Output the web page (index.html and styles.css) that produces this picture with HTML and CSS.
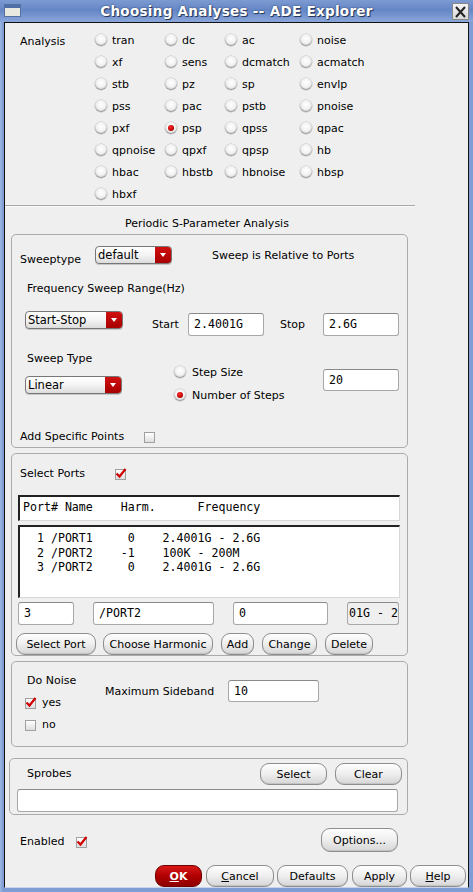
FILE: index.html
```html
<!DOCTYPE html>
<html>
<head>
<meta charset="utf-8">
<title>Choosing Analyses -- ADE Explorer</title>
<link rel="stylesheet" href="styles.css">
</head>
<body>
<div class="win">
  <div class="titlebar">
    <span class="ticon"><span class="ticon-bar"></span></span>
    <span class="ttext">Choosing Analyses -- ADE Explorer</span>
    <span class="tclose"><svg width="15" height="14" viewBox="0 0 15 14"><path d="M3 2 L12 12 M12 2 L3 12" stroke="#222" stroke-width="2"/></svg></span>
  </div>
  <div class="frame">
    <div class="content">
      <div class="analysis">
        <div class="alabel">Analysis</div>
        <div class="agrid">
          <label class="radio"><span class="rb"></span>tran</label>
          <label class="radio"><span class="rb"></span>dc</label>
          <label class="radio"><span class="rb"></span>ac</label>
          <label class="radio"><span class="rb"></span>noise</label>
          <label class="radio"><span class="rb"></span>xf</label>
          <label class="radio"><span class="rb"></span>sens</label>
          <label class="radio"><span class="rb"></span>dcmatch</label>
          <label class="radio"><span class="rb"></span>acmatch</label>
          <label class="radio"><span class="rb"></span>stb</label>
          <label class="radio"><span class="rb"></span>pz</label>
          <label class="radio"><span class="rb"></span>sp</label>
          <label class="radio"><span class="rb"></span>envlp</label>
          <label class="radio"><span class="rb"></span>pss</label>
          <label class="radio"><span class="rb"></span>pac</label>
          <label class="radio"><span class="rb"></span>pstb</label>
          <label class="radio"><span class="rb"></span>pnoise</label>
          <label class="radio"><span class="rb"></span>pxf</label>
          <label class="radio"><span class="rb on"></span>psp</label>
          <label class="radio"><span class="rb"></span>qpss</label>
          <label class="radio"><span class="rb"></span>qpac</label>
          <label class="radio"><span class="rb"></span>qpnoise</label>
          <label class="radio"><span class="rb"></span>qpxf</label>
          <label class="radio"><span class="rb"></span>qpsp</label>
          <label class="radio"><span class="rb"></span>hb</label>
          <label class="radio"><span class="rb"></span>hbac</label>
          <label class="radio"><span class="rb"></span>hbstb</label>
          <label class="radio"><span class="rb"></span>hbnoise</label>
          <label class="radio"><span class="rb"></span>hbsp</label>
          <label class="radio"><span class="rb"></span>hbxf</label>
        </div>
      </div>
      <div class="sep"></div>
      <div class="section-title">Periodic S-Parameter Analysis</div>

      <div class="group g1">
        <div class="rowA">
          <span class="lbl sweeptype">Sweeptype</span>
          <span class="combo c-default"><span class="ctext">default</span><span class="carrow"></span></span>
          <span class="lbl relative">Sweep is Relative to Ports</span>
        </div>
        <div class="lbl freqrange">Frequency Sweep Range(Hz)</div>
        <div class="rowC">
          <span class="combo c-startstop"><span class="ctext">Start-Stop</span><span class="carrow"></span></span>
          <span class="lbl startlbl">Start</span>
          <span class="field f-start">2.4001G</span>
          <span class="lbl stoplbl">Stop</span>
          <span class="field f-stop">2.6G</span>
        </div>
        <div class="lbl sweeptypelbl">Sweep Type</div>
        <div class="rowE">
          <span class="combo c-linear"><span class="ctext">Linear</span><span class="carrow"></span></span>
          <div class="radiocol">
            <label class="radio r2"><span class="rb"></span>Step Size</label>
            <label class="radio r2"><span class="rb on"></span>Number of Steps</label>
          </div>
          <span class="field f-steps">20</span>
        </div>
        <div class="rowF">
          <span class="lbl addpts">Add Specific Points</span>
          <span class="cb"></span>
        </div>
      </div>

      <div class="group g2">
        <div class="rowSP">
          <span class="lbl selports">Select Ports</span>
          <span class="cb checked"><svg width="12" height="12" viewBox="0 0 12 12"><path d="M1.5 5.5 L4.5 8.5 L10.5 1" fill="none" stroke="#d00000" stroke-width="2.2"/></svg></span>
        </div>
        <div class="listhead mono">Port# Name    Harm.      Frequency</div>
        <div class="listbody mono">  1 /PORT1     0    2.4001G - 2.6G
  2 /PORT2    -1    100K - 200M
  3 /PORT2     0    2.4001G - 2.6G</div>
        <div class="rowIn">
          <span class="field fi1">3</span>
          <span class="field fi2">/PORT2</span>
          <span class="field fi3">0</span>
          <span class="field fi4 ro">01G - 2</span>
        </div>
        <div class="rowBtn">
          <span class="btn b-sel">Select Port</span>
          <span class="btn b-harm">Choose Harmonic</span>
          <span class="btn b-add">Add</span>
          <span class="btn b-chg">Change</span>
          <span class="btn b-del">Delete</span>
        </div>
      </div>

      <div class="group g3">
        <div class="noisecol">
          <div class="lbl donoise">Do Noise</div>
          <div class="cbrow"><span class="cb checked"><svg width="12" height="12" viewBox="0 0 12 12"><path d="M1.5 5.5 L4.5 8.5 L10.5 1" fill="none" stroke="#d00000" stroke-width="2.2"/></svg></span><span class="lbl">yes</span></div>
          <div class="cbrow"><span class="cb"></span><span class="lbl">no</span></div>
        </div>
        <span class="lbl maxsb">Maximum Sideband</span>
        <span class="field f-sb">10</span>
      </div>

      <div class="group g4">
        <div class="rowSprobe">
          <span class="lbl sprobes">Sprobes</span>
          <span class="btn b-select">Select</span>
          <span class="btn b-clear">Clear</span>
        </div>
        <div class="field f-sprobe"></div>
      </div>

      <div class="rowEnabled">
        <span class="lbl enabled">Enabled</span>
        <span class="cb checked"><svg width="12" height="12" viewBox="0 0 12 12"><path d="M1.5 5.5 L4.5 8.5 L10.5 1" fill="none" stroke="#d00000" stroke-width="2.2"/></svg></span>
        <span class="btn b-options">Options...</span>
      </div>

      <div class="rowBottom">
        <span class="btn b-ok"><u>O</u>K</span>
        <span class="btn b-cancel"><u>C</u>ancel</span>
        <span class="btn b-defaults">Defaults</span>
        <span class="btn b-apply">Apply</span>
        <span class="btn b-help"><u>H</u>elp</span>
      </div>
    </div>
  </div>
</div>
</body>
</html>
```
FILE: styles.css
```css
* { box-sizing: border-box; }
html, body { margin: 0; padding: 0; }
body {
  width: 473px;
  height: 892px;
  overflow: hidden;
  font-family: "DejaVu Sans", sans-serif;
  font-size: 11px;
  color: #000;
  background: #7f9dd4;
}
.win { width: 473px; height: 892px; display: flex; flex-direction: column; }

.titlebar {
  height: 22px;
  display: flex;
  align-items: center;
  position: relative;
  background: linear-gradient(to bottom, #7d9bd2 0%, #6586c6 45%, #8aa6da 100%);
}
.ticon {
  position: absolute;
  left: 4px; top: 4px;
  width: 17px; height: 13px;
  border: 1px solid #5670a0;
  background: #e8e8e0;
}
.ticon-bar { display: block; height: 3px; background: #4e6ea8; }
.ttext {
  flex: 1;
  text-align: center;
  color: #fff;
  font-weight: bold;
  font-size: 13.5px;
  letter-spacing: 0.3px;
  text-shadow: 1px 1px 0 #2a3a5a, 0 0 2px #2a3a5a;
  padding-left: 0;
}
.tclose {
  position: absolute;
  right: 4px; top: 3px;
  width: 17px; height: 17px;
  border: 1px solid #888;
  background: linear-gradient(#f4f4f4, #d8d8d8);
  display: flex; align-items: center; justify-content: center;
}

.frame {
  flex: 1;
  padding: 0 4px 4px 4px;
  background: linear-gradient(to right, #9fb7e2, #7f9dd4 3px);
}
.content {
  height: 866px;
  background: #efefef;
  border: 1px solid #111;
  border-bottom-color: #c8d4ea;
  display: flex;
  flex-direction: column;
}

.lbl { line-height: 14px; white-space: nowrap; }
.mono { font-family: "DejaVu Sans Mono", "Liberation Mono", monospace; font-size: 11.6px; white-space: pre; }

/* Analysis radios */
.analysis { display: flex; padding: 6px 0 0 15px; height: 182px; }
.alabel { width: 75px; margin-top: 6px; line-height: 14px; }
.agrid {
  display: grid;
  grid-template-columns: 70px 60px 75px 80px;
  grid-auto-rows: 22px;
}
.radio { display: flex; align-items: center; gap: 5px; white-space: nowrap; }
.rb {
  width: 12px; height: 12px;
  border-radius: 50%;
  flex: none;
  background: radial-gradient(circle at 50% 40%, #ffffff 0%, #f2f2f2 45%, #cfcfcf 100%);
  box-shadow: inset 0 -1px 1px #9a9a9a, 0 0 0 0.5px #bdbdbd;
  position: relative;
}
.rb.on::after {
  content: "";
  position: absolute;
  left: 3px; top: 3px;
  width: 6px; height: 6px;
  border-radius: 50%;
  background: radial-gradient(circle at 40% 35%, #ff3030, #c00000 60%, #8a0000);
}

.sep { width: 410px; height: 2px; border-top: 1px solid #a8a8a8; border-bottom: 1px solid #fafafa; }
.section-title { padding: 10px 0 3px 120px; line-height: 14px; }

/* group boxes */
.group {
  margin-left: 6px;
  width: 397px;
  border: 1px solid #ababab;
  border-radius: 5px;
  flex: none;
}
.g1 { height: 214px; }
.g2 { height: 203px; margin-top: 5px; }
.g3 { height: 86px; margin-top: 5px; display: flex; align-items: flex-start; }
.g4 { height: 57px; margin-top: 11px; margin-left: 4px; width: 399px; }

/* combos */
.combo {
  display: flex;
  height: 18px;
  border: 1px solid #777;
  border-radius: 4px;
  background: linear-gradient(#ffffff, #f4f4f4 50%, #dcdcdc);
  overflow: hidden;
  box-shadow: 0 1px 0 #c8c8c8;
  flex: none;
}
.ctext { flex: 1; padding-left: 2px; line-height: 16px; font-size: 11.5px; }
.carrow {
  width: 16px;
  background: linear-gradient(#d01010, #a80000);
  position: relative;
}
.carrow::after {
  content: "";
  position: absolute;
  left: 5px; top: 6px;
  border-left: 3px solid transparent;
  border-right: 3px solid transparent;
  border-top: 4px solid #fff;
}

/* fields */
.field {
  display: block;
  height: 23px;
  background: #fff;
  border: 1px solid #a8a8a8;
  border-top-color: #8a8a8a;
  border-radius: 3px;
  font-family: "DejaVu Sans Mono", "Liberation Mono", monospace;
  font-size: 11.6px;
  line-height: 21px;
  padding-left: 5px;
  white-space: pre;
  overflow: hidden;
  flex: none;
}
.field.ro { background: #efefef; padding-left: 1px; }

/* checkbox */
.cb {
  display: block;
  width: 11px; height: 11px;
  border: 1px solid #a0a0a0;
  background: linear-gradient(#ffffff, #dedede);
  position: relative;
  flex: none;
}
.cb svg { position: absolute; left: -1px; top: -2px; }

/* group 1 */
.rowA { display: flex; align-items: flex-start; margin-top: 11px; height: 20px; padding-left: 8px; }
.sweeptype { width: 75px; margin-top: 7px; }
.c-default { width: 77px; margin-top: 0; }
.relative { margin-left: 40px; margin-top: 3px; }
.freqrange { margin-top: 16px; padding-left: 15px; }
.rowC { display: flex; align-items: flex-start; margin-top: 15px; height: 26px; padding-left: 13px; }
.c-startstop { width: 98px; }
.startlbl { margin-left: 29px; width: 36px; margin-top: 7px; }
.f-start { width: 76px; margin-top: 2px; }
.stoplbl { margin-left: 16px; width: 43px; margin-top: 7px; }
.f-stop { width: 76px; margin-top: 2px; }
.sweeptypelbl { margin-top: 15px; padding-left: 15px; }
.rowE { display: flex; align-items: flex-start; height: 36px; padding-left: 13px; }
.c-linear { width: 97px; margin-top: 10px; }
.radiocol { margin-left: 52px; width: 149px; margin-top: -1px; display: flex; flex-direction: column; gap: 9px; }
.radio.r2 { height: 14px; gap: 6px; }
.f-steps { width: 76px; height: 22px; margin-top: 3px; }
.rowF { display: flex; align-items: flex-start; margin-top: 28px; padding-left: 8px; }
.addpts { width: 124px; }
.rowF .cb { margin-top: 2px; }

/* group 2 */
.rowSP { display: flex; align-items: flex-start; margin-top: 13px; padding-left: 8px; height: 14px; }
.selports { width: 95px; }
.rowSP .cb { margin-top: 2px; }
.listhead {
  margin: 14px 0 0 6px;
  width: 382px; height: 26px;
  background: #fff;
  border-top: 2px solid #222;
  border-left: 2px solid #222;
  border-right: 1px solid #d8d8d8;
  border-bottom: 1px solid #d8d8d8;
  padding: 3px 0 0 3px;
  line-height: 14px;
}
.listbody {
  margin: 4px 0 0 6px;
  width: 382px; height: 73px;
  background: #fff;
  border-top: 2px solid #222;
  border-left: 2px solid #222;
  border-right: 1px solid #d8d8d8;
  border-bottom: 1px solid #d8d8d8;
  padding: 4px 0 0 3px;
  line-height: 14.5px;
}
.rowIn { display: flex; margin: 4px 0 0 6px; gap: 19px; }
.fi1 { width: 56px; }
.fi2 { width: 121px; }
.fi3 { width: 95px; }
.fi4 { width: 52px; }

.btn {
  display: flex;
  align-items: center;
  justify-content: center;
  height: 22px;
  border: 1px solid #8e8e8e;
  border-radius: 9px;
  background: linear-gradient(#fefefe 0%, #f0f0f0 45%, #d6d6d6 100%);
  box-shadow: inset 0 -1px 0 #c4c4c4;
  white-space: nowrap;
  flex: none;
  font-size: 11px;
}
.rowBtn { display: flex; margin: 8px 0 0 4px; }
.b-sel { width: 80px; }
.b-harm { width: 110px; margin-left: 7px; }
.b-add { width: 33px; margin-left: 8px; }
.b-chg { width: 55px; margin-left: 8px; }
.b-del { width: 48px; margin-left: 8px; }

/* group 3 */
.noisecol { margin-left: 13px; width: 80px; }
.donoise { margin-top: 12px; padding-left: 2px; }
.cbrow { display: flex; align-items: center; gap: 6px; height: 14px; margin-top: 8px; }
.maxsb { width: 123px; margin-top: 23px; }
.f-sb { width: 91px; height: 22px; margin-top: 18px; }

/* group 4 */
.rowSprobe { display: flex; align-items: flex-start; margin-top: 4px; height: 22px; }
.sprobes { margin-left: 17px; margin-top: 4px; flex: 1; }
.b-select { width: 67px; }
.b-clear { width: 67px; margin-left: 8px; margin-right: 5px; }
.f-sprobe { margin: 4px 0 0 7px; width: 381px; }

/* enabled */
.rowEnabled { display: flex; align-items: flex-start; margin-top: 13px; height: 24px; padding-left: 15px; }
.enabled { width: 56px; margin-top: 7px; }
.rowEnabled .cb { margin-top: 9px; }
.b-options { margin-left: auto; margin-right: 70px; width: 77px; height: 24px; }

/* bottom */
.rowBottom { display: flex; justify-content: flex-end; margin-top: 13px; padding-right: 2px; }
.rowBottom .btn { height: 22px; }
.b-ok {
  width: 47px;
  background: linear-gradient(#d81818, #b00000 50%, #900000);
  border-color: #700000;
  color: #fff;
  font-weight: bold;
  box-shadow: none;
}
.b-cancel { width: 68px; margin-left: 4px; }
.b-defaults { width: 71px; margin-left: 3px; }
.b-apply { width: 55px; margin-left: 4px; }
.b-help { width: 56px; margin-left: 3px; }
u { text-decoration: underline; text-underline-offset: 1px; }
```
